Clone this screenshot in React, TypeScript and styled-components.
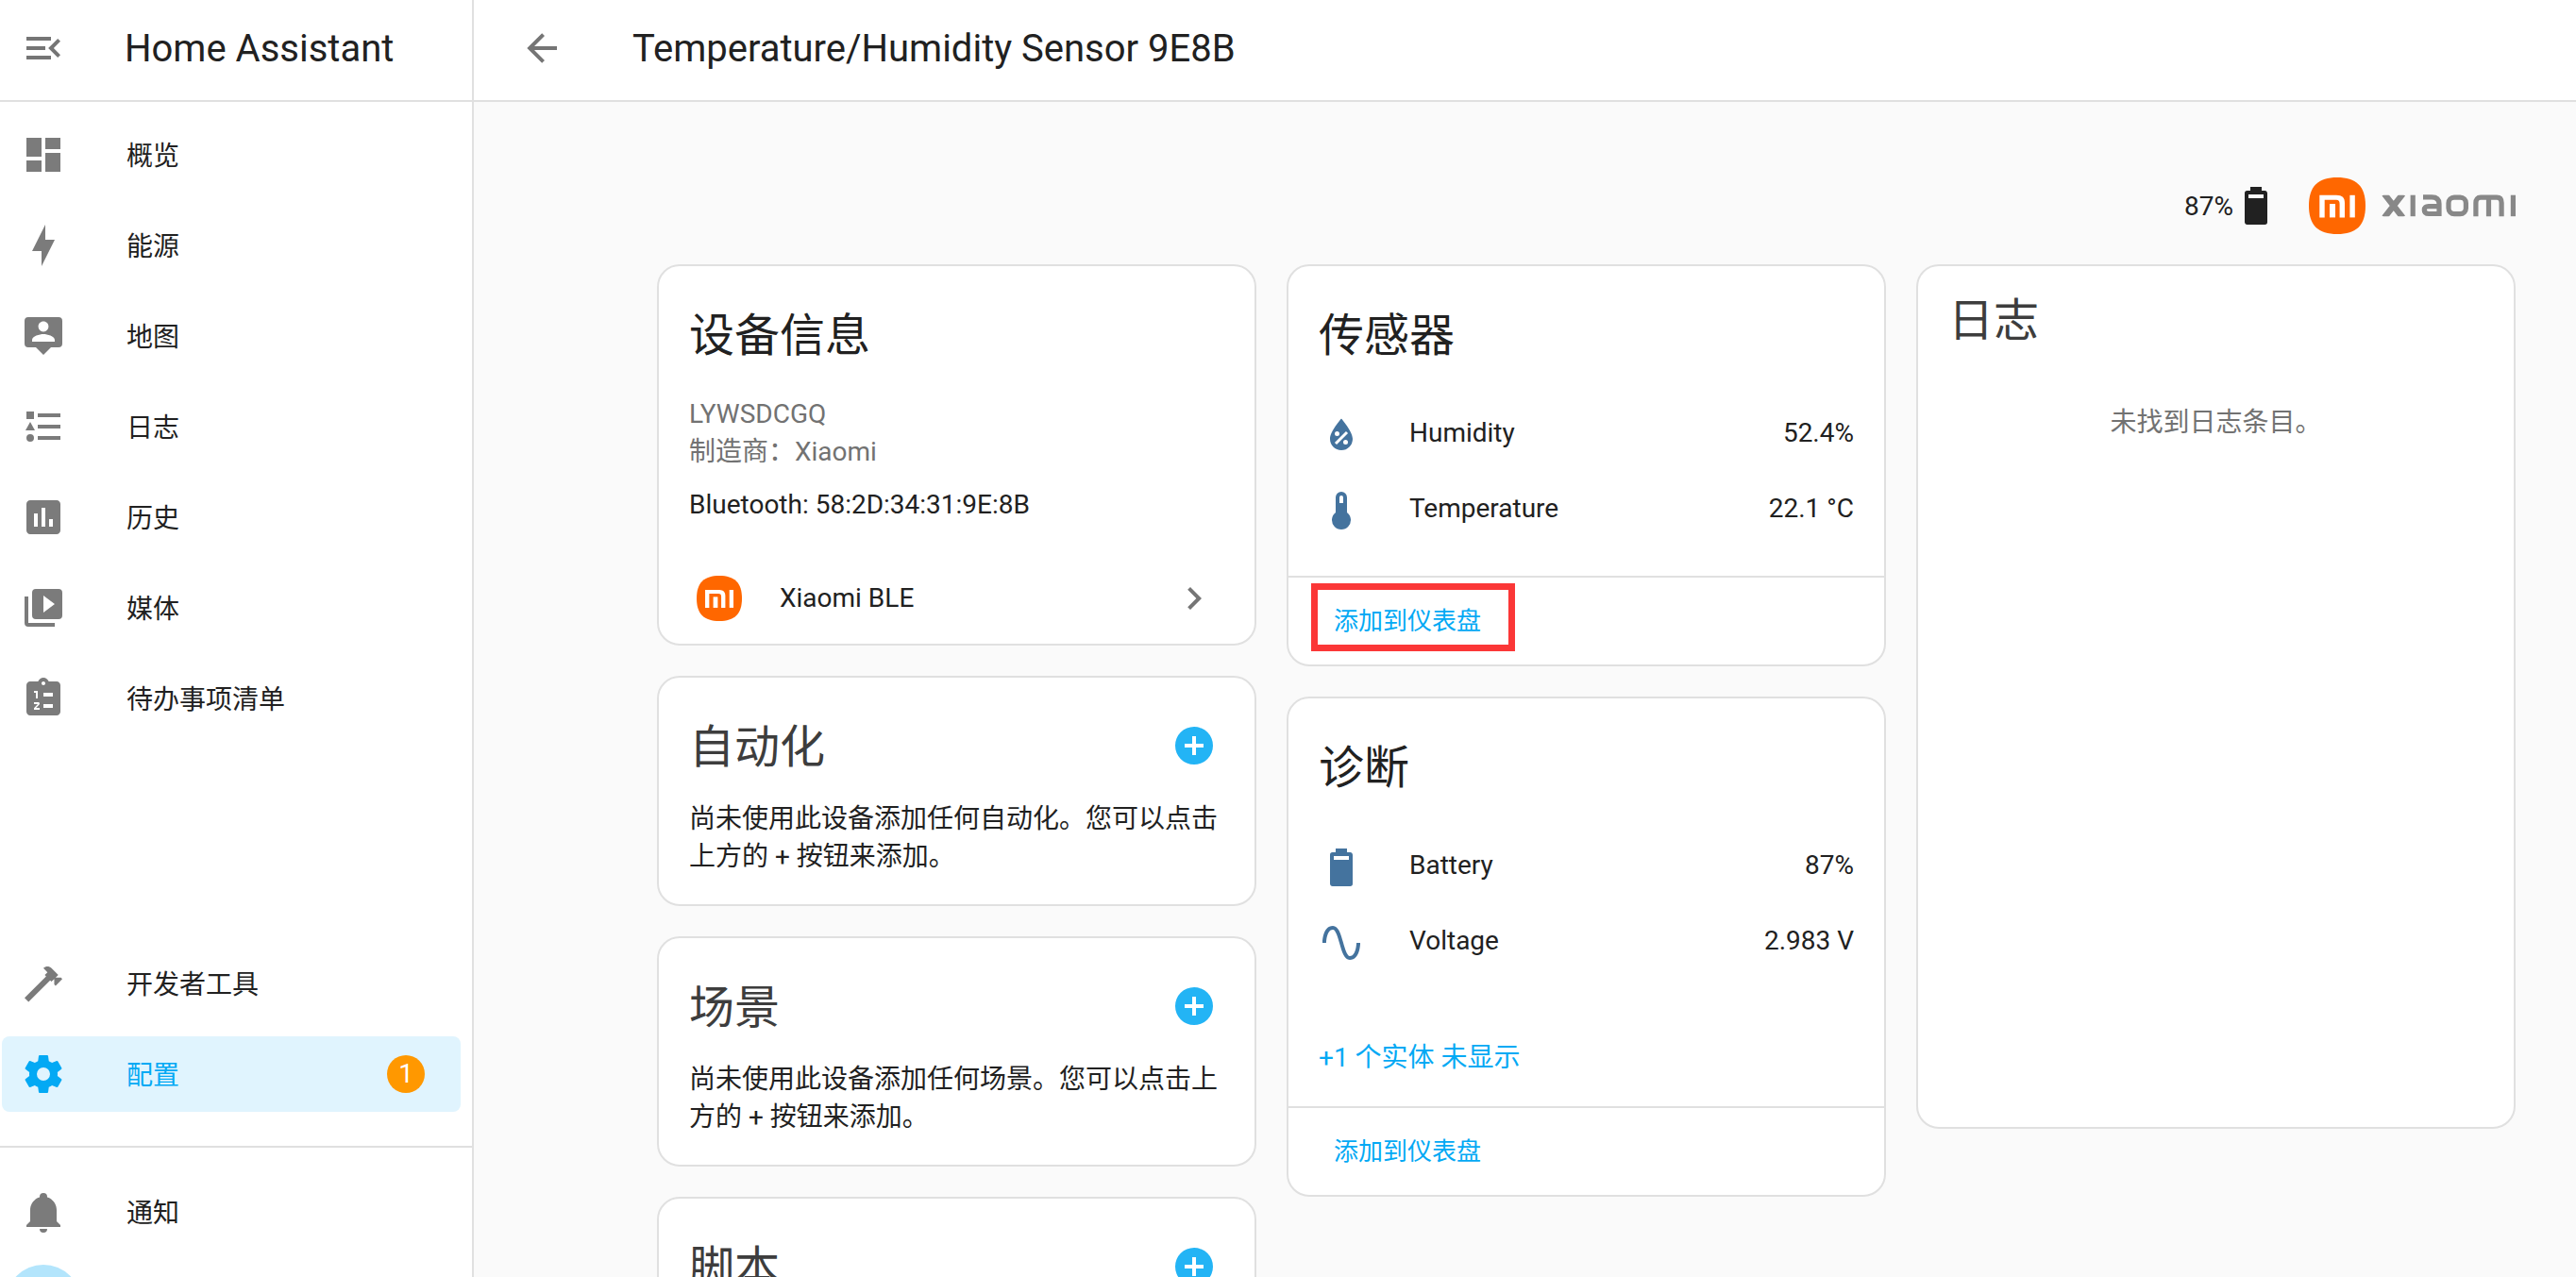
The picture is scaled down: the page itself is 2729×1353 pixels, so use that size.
import React from "react";
import styled, { createGlobalStyle } from "styled-components";

const fonts = `Roboto, "Noto Sans CJK SC", sans-serif`;
const line = "#e0e0e0";
const primary = "#212121";
const secondary = "#727272";
const accent = "#03a9f4";
const stateBlue = "#44739e";

const Global = createGlobalStyle`
  *, *::before, *::after { box-sizing: border-box; }
  html, body, #root { height: 100%; }
  body {
    margin: 0;
    overflow: hidden;
    background: #fafafa;
    color: ${primary};
    font-family: ${fonts};
    font-size: 28px;
    line-height: 40px;
  }
  button {
    font: inherit;
    color: inherit;
    background: none;
    border: 0;
    padding: 0;
    cursor: pointer;
  }
  a { color: inherit; text-decoration: none; }
  h1, h2, p, ul, dl, dd { margin: 0; padding: 0; font-weight: 400; }
`;

/* ---------- icons (24 unit grid) ---------- */

const paths = {
  menuOpen:
    "M21,15.61L19.59,17L14.58,12L19.59,7L21,8.39L17.44,12L21,15.61M3,6H16V8H3V6M3,13V11H13V13H3M3,18V16H16V18H3Z",
  back: "M20,11V13H8L13.5,18.5L12.08,19.92L4.16,12L12.08,4.08L13.5,5.5L8,11H20Z",
  dashboard: "M13,3V9H21V3M13,21H21V11H13M3,21H11V15H3M3,13H11V3H3V13Z",
  flash: "M11 15H6L13 1V9H18L11 23V15Z",
  account:
    "M20,2H4A2,2 0 0,0 2,4V16A2,2 0 0,0 4,18H8L12,22L16,18H20A2,2 0 0,0 22,16V4A2,2 0 0,0 20,2M12,4.3C13.5,4.3 14.7,5.5 14.7,7C14.7,8.5 13.5,9.7 12,9.7C10.5,9.7 9.3,8.5 9.3,7C9.3,5.5 10.5,4.3 12,4.3M18,15H6V14.1C6,12.1 10,11 12,11C14,11 18,12.1 18,14.1V15Z",
  list: "M5,9.5L7.5,14H2.5L5,9.5M3,4H7V8H3V4M5,20A2,2 0 0,0 7,18A2,2 0 0,0 5,16A2,2 0 0,0 3,18A2,2 0 0,0 5,20M9,5V7H21V5H9M9,19H21V17H9V19M9,13H21V11H9V13Z",
  chart:
    "M17 17H15V13H17M13 17H11V7H13M9 17H7V10H9M19 3H5C3.89 3 3 3.89 3 5V19C3 20.1 3.9 21 5 21H19C20.1 21 21 20.1 21 19V5C21 3.89 20.1 3 19 3Z",
  play: "M4,6H2V20A2,2 0 0,0 4,22H18V20H4V6M20,2H8A2,2 0 0,0 6,4V16A2,2 0 0,0 8,18H20A2,2 0 0,0 22,16V4A2,2 0 0,0 20,2M12,14.5V5.5L18,10L12,14.5Z",
  clipboard:
    "M19 3H14.82C14.4 1.84 13.3 1 12 1S9.6 1.84 9.18 3H5C3.9 3 3 3.9 3 5V19C3 20.1 3.9 21 5 21H19C20.1 21 21 20.1 21 19V5C21 3.9 20.1 3 19 3M12 3C12.55 3 13 3.45 13 4S12.55 5 12 5 11 4.55 11 4 11.45 3 12 3M7 8H9V12H8V9H7V8M10 17V18H7V17.08L9 15H7V14H9.25C9.66 14 10 14.34 10 14.75C10 14.95 9.92 15.14 9.79 15.27L8.12 17H10M17 17H12V15H17V17M17 11H12V9H17V11Z",
  hammer:
    "M2,19.63L13.43,8.2L12.72,7.5L14.14,6.07L12,3.89C13.2,2.7 15.09,2.7 16.27,3.89L19.87,7.5L18.45,8.91H21.29L22,9.62L18.45,13.21L17.74,12.5V9.62L16.27,11.04L15.56,10.33L4.13,21.76L2,19.63Z",
  cog: "M12,15.5A3.5,3.5 0 0,1 8.5,12A3.5,3.5 0 0,1 12,8.5A3.5,3.5 0 0,1 15.5,12A3.5,3.5 0 0,1 12,15.5M19.43,12.97C19.47,12.65 19.5,12.33 19.5,12C19.5,11.67 19.47,11.34 19.43,11L21.54,9.37C21.73,9.22 21.78,8.95 21.66,8.73L19.66,5.27C19.54,5.05 19.27,4.96 19.05,5.05L16.56,6.05C16.04,5.66 15.5,5.32 14.87,5.07L14.5,2.42C14.46,2.18 14.25,2 14,2H10C9.75,2 9.54,2.18 9.5,2.42L9.13,5.07C8.5,5.32 7.96,5.66 7.44,6.05L4.95,5.05C4.73,4.96 4.46,5.05 4.34,5.27L2.34,8.73C2.21,8.95 2.27,9.22 2.46,9.37L4.57,11C4.53,11.34 4.5,11.67 4.5,12C4.5,12.33 4.53,12.65 4.57,12.97L2.46,14.63C2.27,14.78 2.21,15.05 2.34,15.27L4.34,18.73C4.46,18.95 4.73,19.03 4.95,18.95L7.44,17.94C7.96,18.34 8.5,18.68 9.13,18.93L9.5,21.58C9.54,21.82 9.75,22 10,22H14C14.25,22 14.46,21.82 14.5,21.58L14.87,18.93C15.5,18.67 16.04,18.34 16.56,17.94L19.05,18.95C19.27,19.03 19.54,18.95 19.66,18.73L21.66,15.27C21.78,15.05 21.73,14.78 21.54,14.63L19.43,12.97Z",
  bell: "M21,19V20H3V19L5,17V11C5,7.9 7.03,5.17 10,4.29C10,4.19 10,4.1 10,4A2,2 0 0,1 12,2A2,2 0 0,1 14,4C14,4.1 14,4.19 14,4.29C16.97,5.17 19,7.9 19,11V17L21,19M14,21A2,2 0 0,1 12,23A2,2 0 0,1 10,21",
  battery90:
    "M16,8H8V6H16M16.67,4H15V2H9V4H7.33A1.33,1.33 0 0,0 6,5.33V20.67C6,21.4 6.6,22 7.33,22H16.67A1.33,1.33 0 0,0 18,20.67V5.33C18,4.6 17.4,4 16.67,4Z",
  chevron: "M8.59,16.58L13.17,12L8.59,7.41L10,6L16,12L10,18L8.59,16.58Z",
  plusCircle:
    "M17,13H13V17H11V13H7V11H11V7H13V11H17M12,2A10,10 0 0,0 2,12A10,10 0 0,0 12,22A10,10 0 0,0 22,12A10,10 0 0,0 12,2Z",
  water:
    "M12,3.25C12,3.25 6,10 6,14C6,17.32 8.69,20 12,20A6,6 0 0,0 18,14C18,10 12,3.25 12,3.25M14.47,9.97L15.53,11.03L9.53,17.03L8.47,15.97M9.75,10A1.25,1.25 0 0,1 11,11.25A1.25,1.25 0 0,1 9.75,12.5A1.25,1.25 0 0,1 8.5,11.25A1.25,1.25 0 0,1 9.75,10M14.25,14.5A1.25,1.25 0 0,1 15.5,15.75A1.25,1.25 0 0,1 14.25,17A1.25,1.25 0 0,1 13,15.75A1.25,1.25 0 0,1 14.25,14.5Z",
  thermometer:
    "M15 13V5A3 3 0 0 0 9 5V13A5 5 0 1 0 15 13M12 4A1 1 0 0 1 13 5V8H11V5A1 1 0 0 1 12 4Z",
  sine: "M16.5,21C13.5,21 12.31,16.76 11.05,12.28C10.14,9.04 9,5 7.5,5C4.11,5 4,11.93 4,12H2C2,11.63 2.06,3 7.5,3C10.5,3 11.71,7.25 12.97,11.74C13.83,14.8 15,19 16.5,19C19.94,19 20.03,12.07 20.03,12H22.03C22.03,12.37 21.97,21 16.5,21Z",
};

type IconName = keyof typeof paths;

const Svg = styled.svg`
  display: block;
  flex: none;
  width: 48px;
  height: 48px;
  fill: currentColor;
`;

const Icon = ({ name }: { name: IconName }) => (
  <Svg viewBox="0 0 24 24" aria-hidden="true">
    <path d={paths[name]} fillRule={name === "clipboard" ? "evenodd" : undefined} />
  </Svg>
);

const MiShapes = () => (
  <>
    <path d="M30 0C50 0 60 9 60 30S50 60 30 60S0 51 0 30S10 0 30 0Z" fill="#ff6700" />
    <path
      d="M11.3 42.4V18.800H29C35.500 18.800 38 21.500 38 27V42.400H32.600V28C32.600 25 31.500 23.800 29 23.800H16.700V42.400Z"
      fill="#fff"
    />
    <rect x="22" y="28" width="6" height="14.400" fill="#fff" />
    <rect x="43.400" y="18.800" width="5.400" height="23.600" fill="#fff" />
  </>
);

const MiSvg = styled.svg`
  display: block;
  flex: none;
  width: 48px;
  height: 48px;
`;

const BrandSvg = styled.svg`
  display: block;
  flex: none;
  width: 219px;
  height: 60px;
`;

const Brand = () => (
  <BrandSvg viewBox="0 0 219 60" role="img" aria-label="Xiaomi">
    <MiShapes />
    <g fill="none" stroke="#888" strokeWidth="5.200">
      <g strokeWidth="6.400">
        <path d="M80 17.500L99.500 42.500M99.500 17.500L80 42.500" clipPath="url(#wordmark)" />
      </g>
      <path d="M110.200 18.700V41.200" />
      <path d="M121 20.900H130Q138 20.900 138 28V38.500H127Q122.300 38.500 122.300 34.500T127 30.600H138" />
      <rect x="148" y="21.200" width="18.400" height="17.400" rx="6" />
      <path d="M176.900 41.200V27Q176.900 21.200 182 21.200H199Q204.100 21.200 204.100 27V41.200M190.500 21.200V41.200" />
      <path d="M216.400 18.700V41.200" />
    </g>
    <clipPath id="wordmark">
      <rect x="76" y="18.700" width="143" height="22.500" />
    </clipPath>
  </BrandSvg>
);

/* ---------- shell ---------- */

const Shell = styled.div`
  display: grid;
  grid-template-columns: 502px minmax(0, 1fr);
  height: 100vh;
  overflow: hidden;
`;

const Sidebar = styled.aside`
  display: flex;
  flex-direction: column;
  min-height: 0;
  overflow: hidden;
  background: #fff;
  border-right: 2px solid ${line};
`;

const Bar = styled.header`
  display: flex;
  flex: none;
  align-items: center;
  height: 108px;
  padding: 0 22px 4px;
  background: #fff;
  border-bottom: 2px solid ${line};
`;

const MainBar = styled(Bar)`
  padding-left: 48px;
`;

const BarTitle = styled.h1`
  margin-left: 62px;
  padding-top: 2px;
  font-size: 40px;
  line-height: 48px;
  white-space: nowrap;
`;

const MainTitle = styled(BarTitle)`
  margin-left: 72px;
`;

const BarButton = styled.button`
  color: #757575;
`;

const Nav = styled.nav`
  display: flex;
  flex: 1;
  flex-direction: column;
  min-height: 0;
`;

const NavList = styled.div`
  display: flex;
  flex-direction: column;
  gap: 16px;
  padding: 16px 12px 0 2px;
`;

const Spacer = styled.div`
  flex: 1;
`;

const UserList = styled(NavList)`
  flex: none;
  height: 139px;
  margin-top: 36px;
  padding-top: 28px;
  border-top: 2px solid ${line};
`;

const NavLink = styled.a<{ $active?: boolean }>`
  display: flex;
  flex: none;
  align-items: center;
  gap: 64px;
  height: 80px;
  padding: 0 38px 0 20px;
  border-radius: 8px;
  color: ${(p) => (p.$active ? accent : primary)};
  background: ${(p) => (p.$active ? "#e0f4fe" : "transparent")};

  svg {
    color: ${(p) => (p.$active ? accent : "#7b7b7b")};
  }
`;

const NavLabel = styled.span`
  flex: 1;
  padding-top: 4px;
`;

const Badge = styled.span`
  width: 40px;
  height: 40px;
  border-radius: 50%;
  background: #ff9800;
  color: #fff;
  text-align: center;
`;

const Avatar = styled.span`
  flex: none;
  width: 80px;
  height: 80px;
  margin-left: 4px;
  border-radius: 50%;
  background: #b3e5fc;
`;

/* ---------- main ---------- */

const Main = styled.main`
  display: flex;
  flex-direction: column;
  min-width: 0;
  min-height: 0;
`;

const Content = styled.div`
  flex: 1;
  min-height: 0;
  overflow: hidden;
  padding: 80px 64px 0 194px;
`;

const Overview = styled.div`
  display: flex;
  align-items: center;
  justify-content: flex-end;
  gap: 32px;
  margin-bottom: 32px;
`;

const BatteryState = styled.div`
  display: flex;
  align-items: center;

  span { padding-top: 2px; }
`;

const Columns = styled.div`
  display: grid;
  grid-template-columns: repeat(3, minmax(0, 1fr));
  align-items: start;
  gap: 32px;
`;

const Column = styled.div`
  display: flex;
  flex-direction: column;
  gap: 32px;
`;

const Card = styled.section`
  background: #fff;
  border: 2px solid ${line};
  border-radius: 24px;
`;

const CardTitle = styled.h2<{ $soft?: boolean }>`
  display: flex;
  align-items: center;
  justify-content: space-between;
  padding: 26px 40px 0 32px;
  font-size: 48px;
  line-height: 96px;
  opacity: ${(p) => (p.$soft ? 0.87 : 1)};

  button {
    margin-bottom: 4px;
    color: ${accent};
  }
`;

const InfoBody = styled.div`
  padding: 15px 32px 39px;
`;

const Muted = styled.p`
  color: ${secondary};
`;

const Connection = styled.p`
  margin-top: 16px;
`;

const Integration = styled.a`
  display: flex;
  align-items: center;
  gap: 40px;
  height: 80px;
  padding: 0 40px;
  margin-bottom: 8px;

  span { flex: 1; }
  svg:last-child { color: #757575; }
`;

const Hint = styled.p`
  padding: 8px 32px 30px;
`;

const Rows = styled.dl`
  padding: 14px 32px 0;
`;

const Row = styled.div`
  display: flex;
  align-items: center;
  height: 80px;

  dt, dd { padding-top: 2px; }
`;

const RowIcon = styled.span`
  padding-top: 6px;
  margin-right: 48px;
  color: ${stateBlue};
`;

const RowName = styled.dt`
  flex: 1;
`;

const HiddenLink = styled.button`
  display: block;
  margin: 64px 32px 0;
  padding-top: 2px;
  color: ${accent};
  line-height: 38px;
`;

const CardActions = styled.div`
  display: flex;
  align-items: center;
  height: 94px;
  margin-top: 32px;
  padding: 0 16px 4px;
  border-top: 2px solid ${line};
`;

const ActionButton = styled.button`
  position: relative;
  height: 72px;
  padding: 4px 32px 0;
  color: ${accent};
  font-size: 26px;
`;

const Marker = styled.span`
  position: absolute;
  inset: -2px -4px 2px 8px;
  border: 7px solid #fb3737;
  pointer-events: none;
`;

const LogCard = styled(Card)`
  min-height: 916px;
`;

const LogTitle = styled(CardTitle)`
  padding-top: 10px;
`;

const LogEmpty = styled.p`
  padding: 40px 32px;
  color: ${secondary};
  text-align: center;
`;

const navItems: { icon: IconName; label: string }[] = [
  { icon: "dashboard", label: "概览" },
  { icon: "flash", label: "能源" },
  { icon: "account", label: "地图" },
  { icon: "list", label: "日志" },
  { icon: "chart", label: "历史" },
  { icon: "play", label: "媒体" },
  { icon: "clipboard", label: "待办事项清单" },
];

type Entity = { icon: IconName; name: string; value: string };

const sensors: Entity[] = [
  { icon: "water", name: "Humidity", value: "52.4%" },
  { icon: "thermometer", name: "Temperature", value: "22.1 °C" },
];

const diagnostics: Entity[] = [
  { icon: "battery90", name: "Battery", value: "87%" },
  { icon: "sine", name: "Voltage", value: "2.983 V" },
];

const EntityRows = ({ items }: { items: Entity[] }) => (
  <Rows>
    {items.map((e) => (
      <Row key={e.name}>
        <RowIcon>
          <Icon name={e.icon} />
        </RowIcon>
        <RowName>{e.name}</RowName>
        <dd>{e.value}</dd>
      </Row>
    ))}
  </Rows>
);

const AddCard = ({ title, hint }: { title: string; hint: string }) => (
  <Card>
    <CardTitle $soft>
      {title}
      <button type="button" aria-label={title}>
        <Icon name="plusCircle" />
      </button>
    </CardTitle>
    <Hint>{hint}</Hint>
  </Card>
);

export default function App() {
  return (
    <>
      <Global />
      <Shell>
        <Sidebar>
          <Bar>
            <BarButton type="button" aria-label="菜单">
              <Icon name="menuOpen" />
            </BarButton>
            <BarTitle as="div">Home Assistant</BarTitle>
          </Bar>
          <Nav>
            <NavList>
              {navItems.map((n) => (
                <NavLink href="#" key={n.label}>
                  <Icon name={n.icon} />
                  <NavLabel>{n.label}</NavLabel>
                </NavLink>
              ))}
            </NavList>
            <Spacer />
            <NavList>
              <NavLink href="#">
                <Icon name="hammer" />
                <NavLabel>开发者工具</NavLabel>
              </NavLink>
              <NavLink href="#" $active>
                <Icon name="cog" />
                <NavLabel>配置</NavLabel>
                <Badge>1</Badge>
              </NavLink>
            </NavList>
            <UserList>
              <NavLink href="#">
                <Icon name="bell" />
                <NavLabel>通知</NavLabel>
              </NavLink>
              <Avatar />
            </UserList>
          </Nav>
        </Sidebar>

        <Main>
          <MainBar>
            <BarButton type="button" aria-label="返回">
              <Icon name="back" />
            </BarButton>
            <MainTitle>Temperature/Humidity Sensor 9E8B</MainTitle>
          </MainBar>
          <Content>
            <Overview>
              <BatteryState>
                <span>87%</span>
                <Icon name="battery90" />
              </BatteryState>
              <Brand />
            </Overview>
            <Columns>
              <Column>
                <Card>
                  <CardTitle>设备信息</CardTitle>
                  <InfoBody>
                    <Muted>LYWSDCGQ</Muted>
                    <Muted>制造商：Xiaomi</Muted>
                    <Connection>Bluetooth: 58:2D:34:31:9E:8B</Connection>
                  </InfoBody>
                  <Integration href="#">
                    <MiSvg viewBox="0 0 60 60" aria-hidden="true">
                      <MiShapes />
                    </MiSvg>
                    <span>Xiaomi BLE</span>
                    <Icon name="chevron" />
                  </Integration>
                </Card>
                <AddCard
                  title="自动化"
                  hint="尚未使用此设备添加任何自动化。您可以点击上方的 + 按钮来添加。"
                />
                <AddCard
                  title="场景"
                  hint="尚未使用此设备添加任何场景。您可以点击上方的 + 按钮来添加。"
                />
                <AddCard
                  title="脚本"
                  hint="尚未使用此设备添加任何脚本。您可以点击上方的 + 按钮来添加。"
                />
              </Column>

              <Column>
                <Card>
                  <CardTitle>传感器</CardTitle>
                  <EntityRows items={sensors} />
                  <CardActions>
                    <ActionButton type="button">
                      添加到仪表盘
                      <Marker />
                    </ActionButton>
                  </CardActions>
                </Card>
                <Card>
                  <CardTitle>诊断</CardTitle>
                  <EntityRows items={diagnostics} />
                  <HiddenLink type="button">+1 个实体 未显示</HiddenLink>
                  <CardActions>
                    <ActionButton type="button">添加到仪表盘</ActionButton>
                  </CardActions>
                </Card>
              </Column>

              <LogCard>
                <LogTitle $soft>日志</LogTitle>
                <LogEmpty>未找到日志条目。</LogEmpty>
              </LogCard>
            </Columns>
          </Content>
        </Main>
      </Shell>
    </>
  );
}
